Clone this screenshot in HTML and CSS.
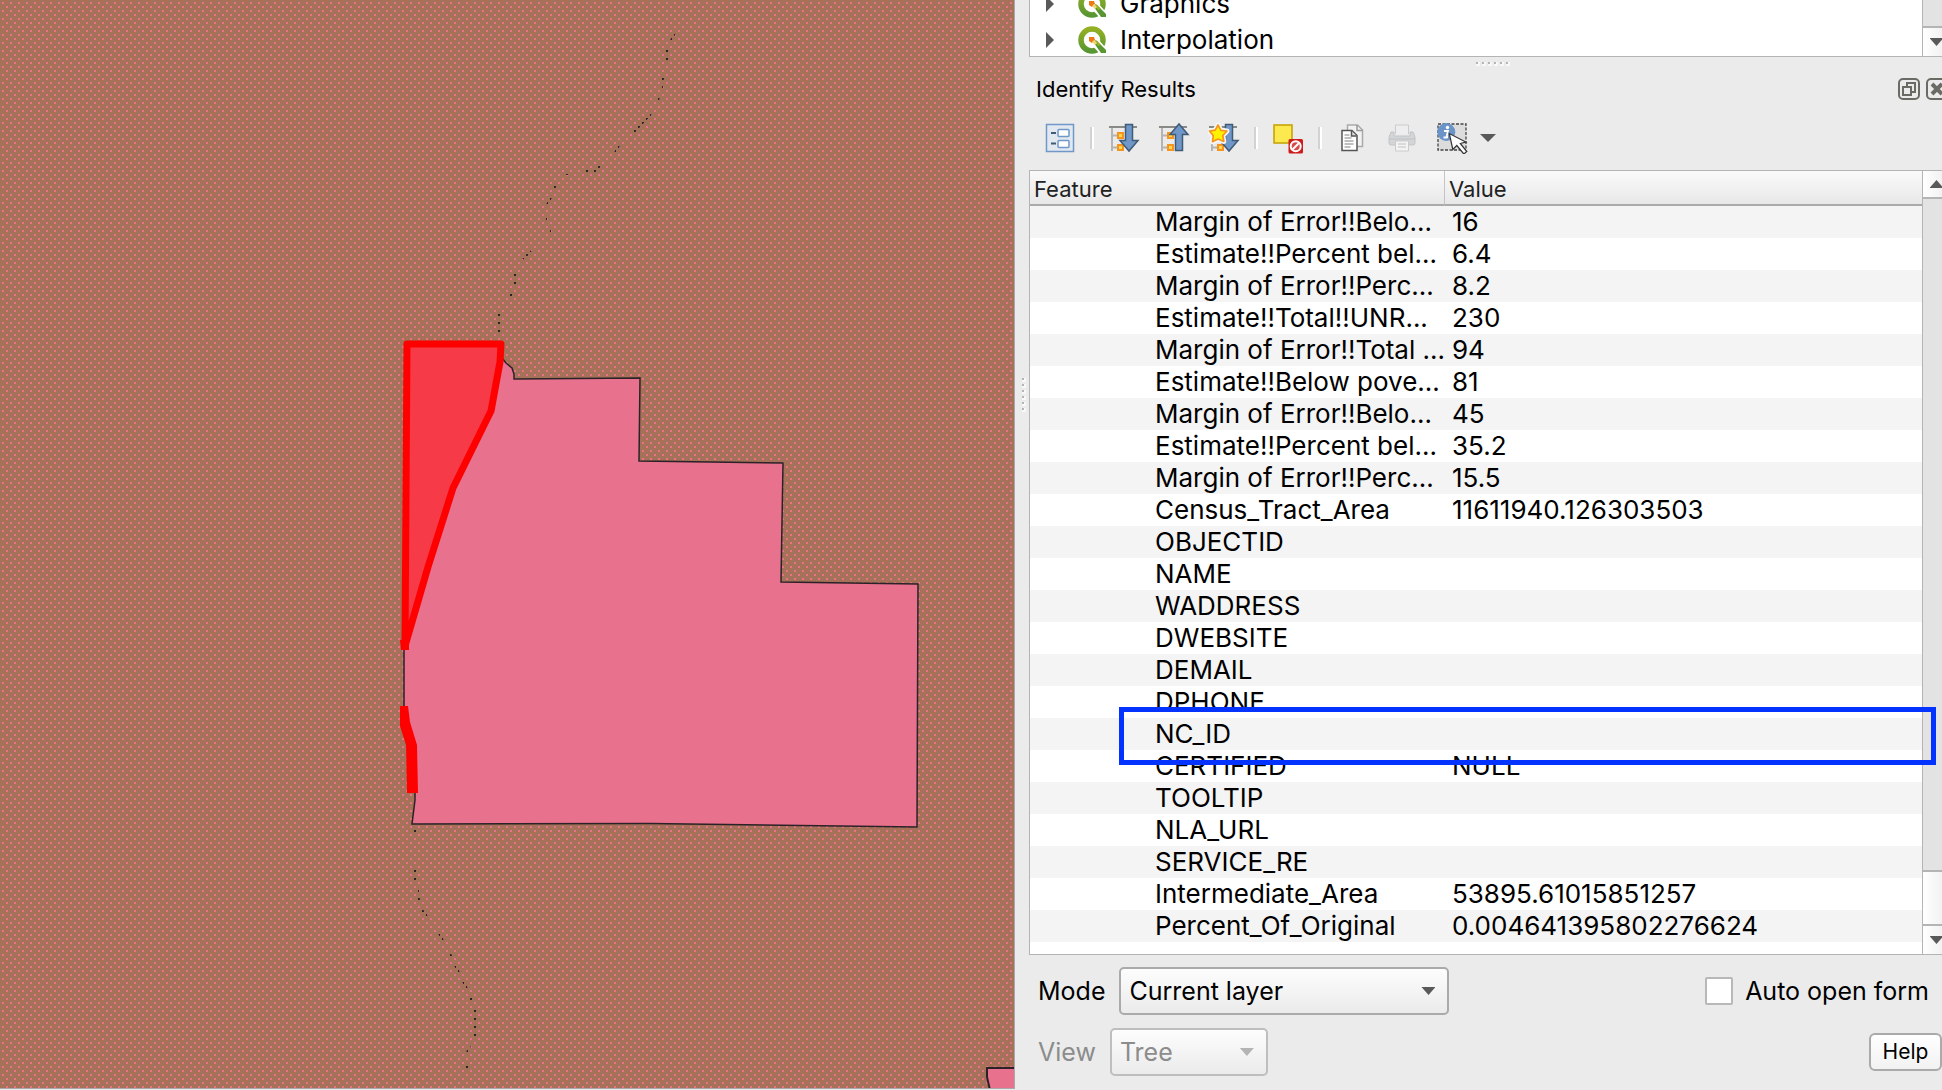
FILE: index.html
```
<!DOCTYPE html>
<html lang="en">
<head>
<meta charset="utf-8">
<title>Identify Results</title>
<link rel="stylesheet" href="styles.css">
</head>
<body>
<svg class="defs" aria-hidden="true">
  <defs>
    <linearGradient id="q-green" x1="0" y1="0" x2="0" y2="1"><stop offset="0" stop-color="#93b023"/><stop offset="1" stop-color="#589632"/></linearGradient>
    <symbol id="logo" viewBox="0 0 28 28">
      <circle cx="14" cy="14" r="11" fill="none" stroke="url(#q-green)" stroke-width="5.500"/>
      <path d="M11 11h7l10 11v6h-6L12 17z" fill="#fff"/>
      <path d="M16 17l3-2 9 9v3h-5z" fill="#589632"/>
      <path d="M16 15l2-1 5 5-3 1z" fill="#93b023"/>
      <path d="M11 11h5l1 3-3 3-3-2z" fill="#ee7913"/>
      <path d="M14 16l2-2 3 3-2 2z" fill="#f3d77a"/>
    </symbol>
    <symbol id="branch" viewBox="0 0 32 32">
      <path d="M1 5h28" stroke="#888a85" stroke-width="2"/>
      <path d="M4 6v23M4 13.500h5M4 25.500h5" stroke="#b4b4b4" stroke-width="2" fill="none"/>
      <path d="M10 11h5v5h-5zM10 23h5v5h-5z" fill="#fcd94e" stroke="#f7941d" stroke-width="2"/>
    </symbol>
    <symbol id="arrow-down" viewBox="0 0 32 32"><path d="M17.500 2.500h7v16h5.500L21 29l-9-10.500h5.500z" fill="#6f98c9" stroke="#415a75" stroke-width="1.500"/></symbol>
  </defs>
</svg>
<div class="window">
  <main class="map">
    <svg class="canvas" role="img" aria-label="Map of census tract">
      <defs>
        <pattern id="dots" width="8" height="8" patternUnits="userSpaceOnUse"><path d="M2 2h2v2h-2zM6 6h2v2h-2z" fill="#ea708c"/></pattern>
        <pattern id="dark-dots" width="8" height="8" patternUnits="userSpaceOnUse"><path d="M2 2h2v2h-2zM6 6h2v2h-2z" fill="#2a2228"/></pattern>
      </defs>
      <rect width="100%" height="100%" fill="#a57158"/>
      <rect width="100%" height="100%" fill="url(#dots)" shape-rendering="crispEdges"/>
      <g fill="none" stroke="url(#dark-dots)" stroke-width="2">
        <path d="M675 33L671 40M667 50V60M663 78L662 88M659 98L658 100M651 114L634 132M619 146L615 152M600 166L595 171H586M568 174H565M556 186L554 188M551 198L547 204M546 218V220M550 230V232M531 251L523 259M515 273V284M511 294V296M499 314V332"/>
        <path d="M415 829V832M415 870V880M418 890L419 900M422 910L427 916M439 934L443 940M450 954L452 957M455 966L459 972M463 982L467 988M471 998V1000M475 1010V1036M470 1046L467 1052M466 1067H469"/>
      </g>
      <g fill="#e8718d" stroke="#2a2228" stroke-width="1.500">
        <path d="M406 344H500L502 358L506 363L512 368L514 374L514 379L640 378L639 461L783 463L781 582L918 584L917 827L650 823.500L412 824L415 800L415 780L404 720V640z"/>
        <path d="M1018 1068H987V1077L990 1090H1018z" stroke-width="2"/>
      </g>
      <path d="M407 344H501L500 362L491 411L453 488L428 567L405 646z" fill="#f73a48" stroke="#f00" stroke-width="7" stroke-linejoin="round"/>
      <path d="M400 706H408L410 722L417 745L418 793H407L406 745L400 726z" fill="#f00"/>
      <path d="M400 640H409V650H401z" fill="#f00"/>
    </svg>
  </main>
  <aside class="panel">
    <section class="toolbox">
      <ul class="tree">
        <li><i class="tri right"></i><svg class="logo"><use href="#logo"/></svg>Graphics</li>
        <li><i class="tri right"></i><svg class="logo"><use href="#logo"/></svg>Interpolation</li>
      </ul>
      <div class="scroll"><div class="track"></div><div class="step last"><i class="tri down"></i></div></div>
    </section>
    <div class="grip"><i></i><i></i><i></i><i></i><i></i><i></i></div>
    <header class="title">
      <h2>Identify Results</h2>
      <button aria-label="Float"><svg viewBox="0 0 22 22"><rect x="1" y="1" width="20" height="20" rx="4"/><path d="M9 8V5h8v9h-3M5 9h8v8H5z"/></svg></button>
      <button aria-label="Close"><svg viewBox="0 0 22 22"><rect x="1" y="1" width="20" height="20" rx="4"/><path d="M6 6l10 10M16 6L6 16" stroke-width="4"/></svg></button>
    </header>
    <div class="toolbar">
      <button aria-label="Open form"><svg viewBox="0 0 32 32"><rect x="2.500" y="2.500" width="27" height="27" fill="#e2e8ef" stroke="#6f98c9" stroke-width="1.500"/><path d="M7 11h5M7 21.500h5" stroke="#415a75" stroke-width="2"/><g fill="#fff" stroke="#6f98c9" stroke-width="1.500"><rect x="14" y="7.500" width="11" height="7" rx="1"/><rect x="14" y="18.500" width="11" height="7" rx="1"/></g></svg></button>
      <span class="sep"></span>
      <button aria-label="Expand tree"><svg viewBox="0 0 32 32"><use href="#branch"/><use href="#arrow-down"/></svg></button>
      <button aria-label="Collapse tree"><svg viewBox="0 0 32 32"><use href="#branch"/><path d="M17.500 28.500h7v-16h5.500L21 2l-9 10.500h5.500z" fill="#6f98c9" stroke="#415a75" stroke-width="1.500"/></svg></button>
      <button aria-label="Expand new results"><svg viewBox="0 0 32 32"><use href="#branch"/><use href="#arrow-down"/><g stroke-linejoin="round"><path d="M10 3l2.800 5.300 6.200 .7-4.200 4.500 1 6-5.800-2.500-5.500 2.700 .8-6L1.500 9l5.700-.9z" fill="#fff" stroke="#f7f7f7" stroke-width="5"/><path d="M10 3l2.800 5.300 6.200 .7-4.200 4.500 1 6-5.800-2.500-5.500 2.700 .8-6L1.500 9l5.700-.9z" fill="#fff200" stroke="#f7941d" stroke-width="1.700"/></g></svg></button>
      <span class="sep"></span>
      <button aria-label="Clear results"><svg viewBox="0 0 32 32"><rect x="2" y="3" width="18" height="18" fill="#fce94f" stroke="#c4a000" stroke-width="1.500"/><rect x="16.500" y="17" width="14.500" height="14.500" rx="1.500" fill="#cf1b1b"/><circle cx="23.700" cy="24.300" r="5" fill="#d84a4a" stroke="#fff" stroke-width="2"/><path d="M20.500 27.500l6.500-6.500" stroke="#fff" stroke-width="2"/></svg></button>
      <span class="sep"></span>
      <button aria-label="Copy feature"><svg viewBox="0 0 32 32"><path d="M11.500 3h10l5 5v16.500h-15z" fill="#f2f2f2" stroke="#aaa" stroke-width="1.500"/><path d="M21 3v5.500h5.500" fill="none" stroke="#999" stroke-width="1.500"/><path d="M6 8.500h10l5 5V28.500H6z" fill="#fff" stroke="#555" stroke-width="1.500"/><path d="M15.500 9v5h5" fill="#ddd" stroke="#555" stroke-width="1.500"/><path d="M8.500 13h5M8.500 16h7M8.500 19h9M8.500 22h9M8.500 25h6" stroke="#aaa" stroke-width="1.500"/></svg></button>
      <button aria-label="Print" disabled><svg viewBox="0 0 32 32" stroke="#c9cbcc"><path d="M9.500 12V3h13v9" fill="#eee"/><path d="M5 10h3v4h16v-4h3l2 5v6q0 2-2 2H5q-2 0-2-2v-6z" fill="#d3d5d7" stroke="#c2c5c7"/><path d="M3 17h26" stroke="#bfc2c4"/><path d="M9.500 19h13v10h-13z" fill="#f3f3f3"/><path d="M12 22h8M12 25h8" stroke="#d2d2d2" stroke-width="1.500"/></svg></button>
      <button aria-label="Identify feature"><svg viewBox="0 0 32 32"><rect x="2" y="2" width="28" height="26" fill="#dcdcdc" stroke="#444" stroke-width="1.300" stroke-dasharray="3 1.500"/><circle cx="10.300" cy="10" r="9" fill="#6a94c8"/><circle cx="11.500" cy="5.500" r="1.700" fill="#fff"/><path d="M8 9h4l-1.500 6h1.500M7.500 15.500h4" fill="none" stroke="#fff" stroke-width="1.800"/><path d="M13.300 11.500l3.500 16 4-4 7 8.500 3-2.500-6.500-8 5.500-1.500z" fill="#fff" stroke="#333" stroke-width="1.200"/></svg></button>
      <button class="more" aria-label="Identify mode"><i class="tri down wide"></i></button>
    </div>
    <section class="results">
      <div class="view">
        <table>
          <colgroup><col class="name"><col></colgroup>
          <thead><tr><th>Feature</th><th>Value</th></tr></thead>
          <tbody>
            <tr><td>Margin of Error!!Belo...</td><td>16</td></tr>
            <tr><td>Estimate!!Percent bel...</td><td>6.4</td></tr>
            <tr><td>Margin of Error!!Perc...</td><td>8.2</td></tr>
            <tr><td>Estimate!!Total!!UNR...</td><td>230</td></tr>
            <tr><td>Margin of Error!!Total ...</td><td>94</td></tr>
            <tr><td>Estimate!!Below pove...</td><td>81</td></tr>
            <tr><td>Margin of Error!!Belo...</td><td>45</td></tr>
            <tr><td>Estimate!!Percent bel...</td><td>35.2</td></tr>
            <tr><td>Margin of Error!!Perc...</td><td>15.5</td></tr>
            <tr><td>Census_Tract_Area</td><td>11611940.126303503</td></tr>
            <tr><td>OBJECTID</td><td></td></tr>
            <tr><td>NAME</td><td></td></tr>
            <tr><td>WADDRESS</td><td></td></tr>
            <tr><td>DWEBSITE</td><td></td></tr>
            <tr><td>DEMAIL</td><td></td></tr>
            <tr><td>DPHONE</td><td></td></tr>
            <tr class="marked"><td>NC_ID</td><td></td></tr>
            <tr><td>CERTIFIED</td><td>NULL</td></tr>
            <tr><td>TOOLTIP</td><td></td></tr>
            <tr><td>NLA_URL</td><td></td></tr>
            <tr><td>SERVICE_RE</td><td></td></tr>
            <tr><td>Intermediate_Area</td><td>53895.61015851257</td></tr>
            <tr><td>Percent_Of_Original</td><td>0.004641395802276624</td></tr>
          </tbody>
        </table>
      </div>
      <div class="scroll"><div class="step first"><i class="tri up"></i></div><div class="track"></div><div class="thumb"></div><div class="step last"><i class="tri down"></i></div></div>
    </section>
    <footer>
      <div class="row">
        <label for="mode">Mode</label>
        <div class="combo mode"><select id="mode"><option>Current layer</option></select><i class="tri down"></i></div>
        <label class="check"><input type="checkbox">Auto open form</label>
      </div>
      <div class="row off">
        <label for="view">View</label>
        <div class="combo tree-mode"><select id="view" disabled><option>Tree</option></select><i class="tri down"></i></div>
        <button class="help">Help</button>
      </div>
    </footer>
    <div class="grip side"><i></i><i></i><i></i><i></i><i></i><i></i></div>
  </aside>
</div>
</body>
</html>
```
FILE: styles.css
```
*, *::after { box-sizing: border-box; }
body {
  margin: 0;
  overflow: hidden;
  background: #ebebeb;
  color: #000;
  font: 26px/32px Inter, "Liberation Sans", sans-serif;
}
.defs { position: absolute; width: 0; height: 0; }
button { padding: 0; border: 0; background: none; font: inherit; color: inherit; }
svg { display: block; }

/* The dock runs slightly past the right edge of the window */
.window { display: flex; width: calc(100% + 9px); height: 100vh; }
.map {
  flex: 1;
  min-width: 0;
  margin-bottom: 1px;
  border-right: 1px solid #aaa;
  border-bottom: 1px solid #aaa;
  overflow: hidden;
}
.canvas { width: 100%; height: 100%; }
.panel {
  position: relative;
  flex: 0 0 936px;
  min-width: 0;
  display: flex;
  flex-direction: column;
  padding: 0 0 14px 14px;
}

.tri { display: block; flex: none; width: 14px; height: 8px; background: #595959; clip-path: polygon(0 0, 100% 0, 50% 100%); }
.tri.wide { width: 16px; }
.tri.up { clip-path: polygon(50% 0, 100% 100%, 0 100%); }
.tri.right { width: 8px; height: 16px; clip-path: polygon(0 0, 100% 50%, 0 100%); }

.toolbox { display: flex; flex: none; height: 57px; border: 1px solid #b4b4b4; border-top: 0; background: #fff; overflow: hidden; }
.tree { flex: 1; margin: -14px 0 0; padding: 0; list-style: none; }
.tree li { display: flex; align-items: center; height: 36px; padding-left: 16px; }
.logo { width: 28px; height: 28px; margin: 0 14px 0 24px; }

.scroll { display: flex; flex-direction: column; flex: none; width: 28px; border-left: 1px solid #b4b4b4; background: #fff; }
.track { flex: 1; background: #e3e3e3; }
.thumb { height: 54px; border-top: 2px solid #b4b4b4; background: linear-gradient(90deg, #fff, #ececec); }
.step { display: flex; align-items: center; justify-content: center; height: 28px; background: linear-gradient(90deg, #fff, #ececec); }
.step.first { border-bottom: 2px solid #b4b4b4; }
.step.last { height: 30px; border-top: 2px solid #b4b4b4; }

.grip { display: flex; justify-content: center; gap: 4px; height: 13px; padding: 5px 0 0 4px; }
.grip i { width: 2px; height: 2px; background: #b4b4b4; box-shadow: 1px 1px 0 1px #f8f8f8; }
.grip.side { position: absolute; left: 7px; top: 378px; flex-direction: column; height: auto; padding: 0; }

.title { display: flex; align-items: center; gap: 6px; height: 38px; padding: 0 3px 0 7px; }
.title h2 { flex: 1; margin: 0; font-size: 22px; font-weight: 400; }
.title svg { width: 22px; height: 22px; fill: none; stroke: #6b6b66; stroke-width: 2; }

.toolbar { display: flex; align-items: center; height: 62px; padding: 0 0 2px 6px; }
.toolbar button { display: flex; justify-content: center; width: 50px; }
.toolbar svg { width: 32px; height: 32px; }
.toolbar .more { width: 22px; }
.sep { width: 14px; height: 22px; background: linear-gradient(90deg, #d2d2d2 50%, #fff 50%) center / 4px 100% no-repeat; }

.results { display: flex; flex: 1; min-height: 0; border: 1px solid #b4b4b4; background: #fff; }
.view { flex: 1; min-width: 0; }
table { width: 100%; border-collapse: separate; border-spacing: 0; table-layout: fixed; }
.name { width: 415px; }
th {
  height: 35px;
  padding: 2px 0 0 4px;
  border-bottom: 2px solid #aaa;
  background: linear-gradient(#fafafa, #e8e8e8);
  font-size: 22px;
  line-height: 30px;
  font-weight: 400;
  text-align: left;
  color: #222;
}
th:first-child { border-right: 1px solid #c4c4c4; }
td { height: 32px; padding: 0 0 0 7px; white-space: nowrap; }
td:first-child { padding-left: 125px; }
tbody tr:nth-child(odd) { background: #f4f4f4; }

/* Callout around the highlighted attribute */
.marked { position: relative; z-index: 1; }
.marked td:first-child::after { content: ""; position: absolute; left: 89px; right: -14px; top: -11px; height: 58px; border: 5px solid #0433ff; }

footer { font-size: 25px; }
.row { display: flex; align-items: center; height: 48px; padding-left: 9px; gap: 14px; margin-top: 13px; }
.row:first-child { margin-top: 12px; }
.combo { position: relative; height: 48px; }
.combo.mode { width: 330px; }
.combo.tree-mode { width: 158px; }
.combo .tri { position: absolute; right: 14px; top: 20px; }
select {
  width: 100%;
  height: 100%;
  padding: 0 8px;
  border: 2px solid #aaa;
  border-radius: 5px;
  appearance: none;
  background: linear-gradient(#fdfdfd, #ebebeb);
  font: inherit;
  color: inherit;
  opacity: 1;
}
.check { display: flex; align-items: center; gap: 12px; margin: 0 22px 0 auto; }
.check input { width: 28px; height: 28px; margin: 0; border: 2px solid #b8b8b8; border-radius: 2px; appearance: none; background: #fff; }
.off { color: #8c8c8c; }
.off select { border-color: #bebebe; }
.off .tri { background: #b4b4b4; }
.help {
  width: 73px;
  height: 38px;
  margin: 0 9px 0 auto;
  border: 2px solid #aaa;
  border-radius: 6px;
  background: linear-gradient(#fff, #f2f2f2);
  font-size: 21px;
  line-height: 32px;
  color: #000;
}
```
